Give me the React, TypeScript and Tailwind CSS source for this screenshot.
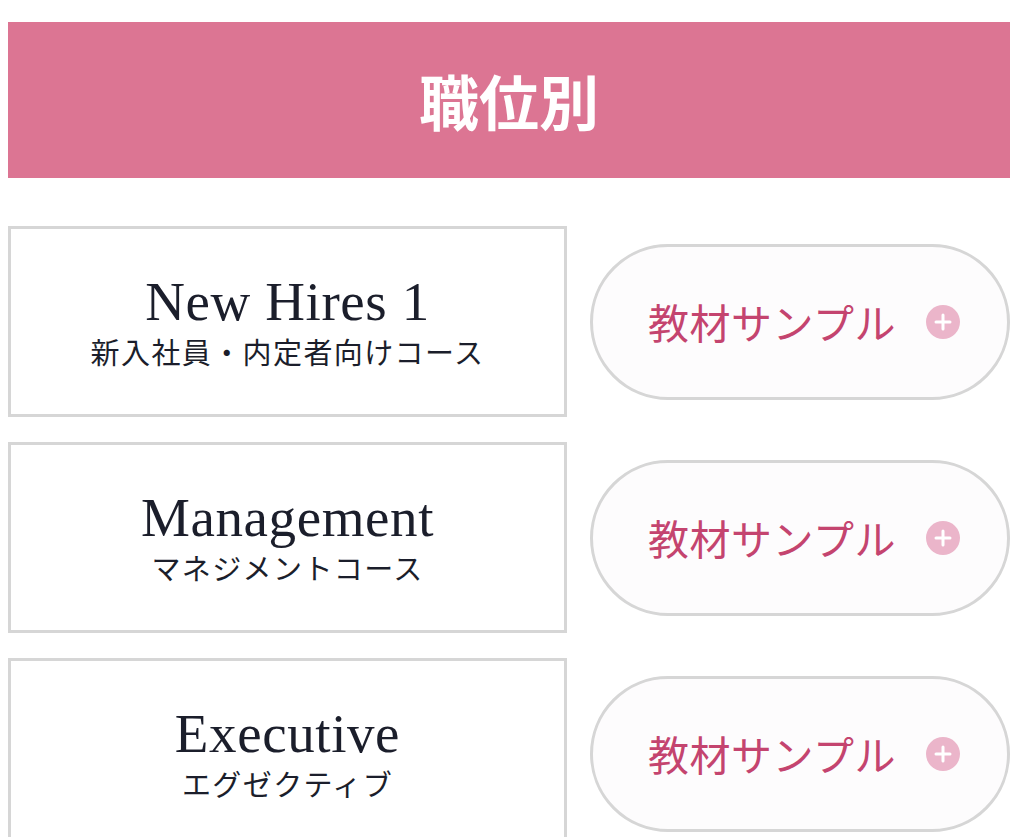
import { Plus } from "lucide-react";

interface Course {
  title: string;
  subtitle: string;
}

const courses: Course[] = [
  { title: "New Hires 1", subtitle: "新入社員・内定者向けコース" },
  { title: "Management", subtitle: "マネジメントコース" },
  { title: "Executive", subtitle: "エグゼクティブ" },
];

const jp = "font-['Noto_Sans_CJK_JP','Noto_Sans',sans-serif]";

export default function App() {
  return (
    <div className="min-h-screen bg-white pl-2 pr-1 pt-[22px]">
      {/* heading band */}
      <div className="flex h-[156px] items-center justify-center bg-[#dc7593] pt-3">
        <h1 className="font-['Liberation_Serif','Noto_Sans_CJK_JP',serif] text-[60px] font-bold leading-none text-white">
          職位別
        </h1>
      </div>

      <div className="mt-12 flex flex-col gap-[25px]">
        {courses.map((c) => (
          <div key={c.title} className="flex items-center gap-[23px]">
            <div className="flex h-[191px] w-[559px] shrink-0 flex-col items-center justify-center border-[3px] border-[#d6d6d6] bg-white">
              <div className="font-['Liberation_Serif',serif] text-[55px] leading-[58px] tracking-[0.6px] text-[#1b1e2b]">
                {c.title}
              </div>
              <div className={`${jp} text-[29px] leading-[40px] tracking-[1.4px] text-[#1b1e2b]`}>
                {c.subtitle}
              </div>
            </div>

            <button className="flex h-[156px] flex-1 items-center justify-center gap-[30px] rounded-full border-[3px] border-[#d6d6d6] bg-[#fdfcfd] pl-2">
              <span className={`${jp} text-[41px] leading-none tracking-[0.5px] text-[#c4446f]`}>教材サンプル</span>
              <span className="flex h-[34px] w-[34px] items-center justify-center rounded-full bg-[#ebb5ca]">
                <Plus className="h-6 w-6 text-white" strokeWidth={3} />
              </span>
            </button>
          </div>
        ))}
      </div>
    </div>
  );
}
